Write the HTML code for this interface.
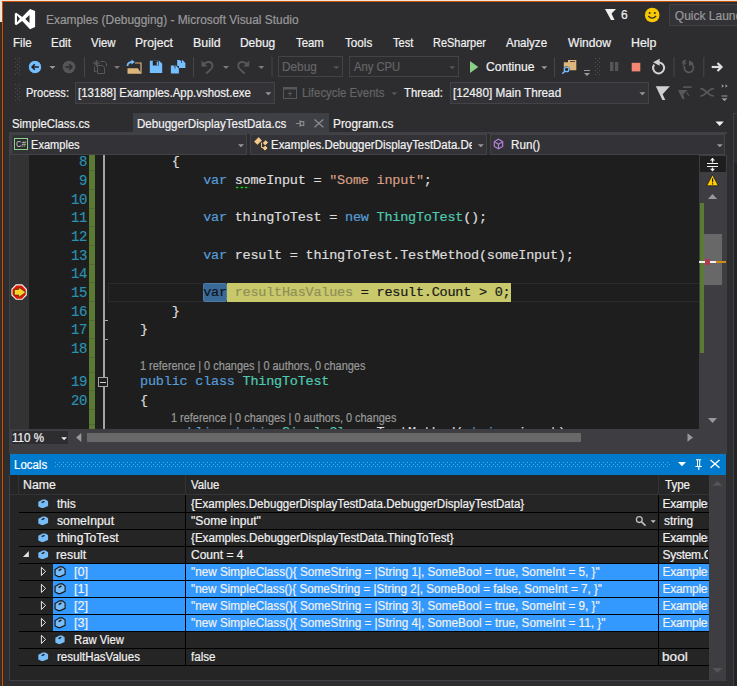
<!DOCTYPE html>
<html><head><meta charset="utf-8"><style>
html,body{margin:0;padding:0;}
body{width:737px;height:686px;overflow:hidden;background:#2d2d30;position:relative;font-family:"Liberation Sans",sans-serif;}
body>div,body>svg{position:absolute;}
.t{line-height:20px;height:20px;white-space:pre;-webkit-text-stroke:0.2px currentColor;}
</style></head><body>
<div style="left:0px;top:0px;width:737px;height:1px;background:#f4e4d8;"></div>
<div style="left:0px;top:0px;width:2px;height:22px;background:#f4e4d8;"></div>
<div style="left:0px;top:22px;width:2px;height:664px;background:#3d2a1f;"></div>
<div style="left:2px;top:1px;width:735px;height:1px;background:#ca5100;"></div>
<div style="left:2px;top:1px;width:1px;height:685px;background:#ca5100;"></div>
<svg style="left:14px;top:8px;" width="22" height="22" viewBox="0 0 22 22"><path fill="#fff" d="M16,0.9 L21.1,3 L21.1,19 L16,21.2 L8.2,12.9 L2.2,17.2 L0.8,16.3 L0.8,5.5 L2.2,4.8 L8.2,9 Z M3,7.2 L3,14.2 L5.9,10.7 Z M15.5,7 L11.3,10.9 L15.5,15 Z" fill-rule="evenodd"/></svg>
<div class="t" style="left:46.31px;top:10px;font-family:'Liberation Sans';font-size:12px;color:#999999;letter-spacing:0px;transform:scaleX(0.9921);transform-origin:0 0;">Examples (Debugging) - Microsoft Visual Studio</div>
<svg style="left:604px;top:8px;" width="13" height="13" viewBox="0 0 13 13"><path fill="#f1f1f1" d="M1,1 L12,1 L7.5,5.5 L10.5,12 L7,12 Z"/></svg>
<div class="t" style="left:620.9px;top:5px;font-family:'Liberation Sans';font-size:12px;color:#f1f1f1;letter-spacing:0px;">6</div>
<svg style="left:644px;top:7px;" width="17" height="17" viewBox="0 0 17 17"><circle cx="8.2" cy="8" r="7.3" fill="#f8c900"/><circle cx="5.6" cy="6" r="1" fill="#2d2d30"/><circle cx="10.8" cy="6" r="1" fill="#2d2d30"/><path d="M4.3,9 Q8.2,13.2 12.1,9" stroke="#2d2d30" stroke-width="1.3" fill="none"/></svg>
<div style="left:669px;top:4px;width:68px;height:22px;background:#333337;box-sizing:border-box;border:1px solid #3f3f46;border-right:none"></div>
<div class="t" style="left:674.8px;top:6px;font-family:'Liberation Sans';font-size:12px;color:#999999;letter-spacing:0px;width:62.2px;overflow:hidden;">Quick Launch</div>
<div class="t" style="left:12.63px;top:33px;font-family:'Liberation Sans';font-size:12px;color:#f1f1f1;letter-spacing:0px;transform:scaleX(0.9667);transform-origin:0 0;">File</div>
<div class="t" style="left:50.74px;top:33px;font-family:'Liberation Sans';font-size:12px;color:#f1f1f1;letter-spacing:0px;transform:scaleX(0.96);transform-origin:0 0;">Edit</div>
<div class="t" style="left:91.1px;top:33px;font-family:'Liberation Sans';font-size:12px;color:#f1f1f1;letter-spacing:0px;transform:scaleX(0.95);transform-origin:0 0;">View</div>
<div class="t" style="left:135.49px;top:33px;font-family:'Liberation Sans';font-size:12px;color:#f1f1f1;letter-spacing:0px;transform:scaleX(1.0139);transform-origin:0 0;">Project</div>
<div class="t" style="left:192.67px;top:33px;font-family:'Liberation Sans';font-size:12px;color:#f1f1f1;letter-spacing:0px;transform:scaleX(1.032);transform-origin:0 0;">Build</div>
<div class="t" style="left:239.9px;top:33px;font-family:'Liberation Sans';font-size:12px;color:#f1f1f1;letter-spacing:0px;">Debug</div>
<div class="t" style="left:296.0px;top:33px;font-family:'Liberation Sans';font-size:12px;color:#f1f1f1;letter-spacing:0px;transform:scaleX(0.9483);transform-origin:0 0;">Team</div>
<div class="t" style="left:344.7px;top:33px;font-family:'Liberation Sans';font-size:12px;color:#f1f1f1;letter-spacing:0px;transform:scaleX(0.9714);transform-origin:0 0;">Tools</div>
<div class="t" style="left:392.6px;top:33px;font-family:'Liberation Sans';font-size:12px;color:#f1f1f1;letter-spacing:0px;transform:scaleX(0.9227);transform-origin:0 0;">Test</div>
<div class="t" style="left:432.59px;top:33px;font-family:'Liberation Sans';font-size:12px;color:#f1f1f1;letter-spacing:0px;transform:scaleX(0.9123);transform-origin:0 0;">ReSharper</div>
<div class="t" style="left:506.4px;top:33px;font-family:'Liberation Sans';font-size:12px;color:#f1f1f1;letter-spacing:0px;transform:scaleX(0.9619);transform-origin:0 0;">Analyze</div>
<div class="t" style="left:567.5px;top:33px;font-family:'Liberation Sans';font-size:12px;color:#f1f1f1;letter-spacing:0px;transform:scaleX(1.0047);transform-origin:0 0;">Window</div>
<div class="t" style="left:630.77px;top:33px;font-family:'Liberation Sans';font-size:12px;color:#f1f1f1;letter-spacing:0px;transform:scaleX(1.0304);transform-origin:0 0;">Help</div>
<div style="left:278px;top:56px;width:65px;height:21px;background:transparent;box-sizing:border-box;border:1px solid #434346"></div>
<div class="t" style="left:281.81px;top:57px;font-family:'Liberation Sans';font-size:12px;color:#656565;letter-spacing:0px;transform:scaleX(0.9853);transform-origin:0 0;">Debug</div>
<div style="left:349px;top:56px;width:110px;height:21px;background:transparent;box-sizing:border-box;border:1px solid #434346"></div>
<div class="t" style="left:353.8px;top:57px;font-family:'Liberation Sans';font-size:12px;color:#656565;letter-spacing:0px;transform:scaleX(0.9347);transform-origin:0 0;">Any CPU</div>
<div class="t" style="left:486.4px;top:57px;font-family:'Liberation Sans';font-size:12px;color:#f1f1f1;letter-spacing:0px;transform:scaleX(1.0104);transform-origin:0 0;">Continue</div>
<div class="t" style="left:25.58px;top:83px;font-family:'Liberation Sans';font-size:12px;color:#f1f1f1;letter-spacing:0px;transform:scaleX(0.92);transform-origin:0 0;">Process:</div>
<div style="left:75px;top:82px;width:200px;height:22px;background:#333337;box-sizing:border-box;border:1px solid #434346"></div>
<div class="t" style="left:78.45px;top:83px;font-family:'Liberation Sans';font-size:12px;color:#f1f1f1;letter-spacing:0px;transform:scaleX(0.9528);transform-origin:0 0;">[13188] Examples.App.vshost.exe</div>
<div class="t" style="left:301.85px;top:83px;font-family:'Liberation Sans';font-size:12px;color:#656565;letter-spacing:0px;transform:scaleX(0.95);transform-origin:0 0;">Lifecycle Events</div>
<div class="t" style="left:403.6px;top:83px;font-family:'Liberation Sans';font-size:12px;color:#f1f1f1;letter-spacing:0px;transform:scaleX(0.939);transform-origin:0 0;">Thread:</div>
<div style="left:449.5px;top:82px;width:199.5px;height:22px;background:#333337;box-sizing:border-box;border:1px solid #434346"></div>
<div class="t" style="left:452.82px;top:83px;font-family:'Liberation Sans';font-size:12px;color:#f1f1f1;letter-spacing:0px;transform:scaleX(0.9789);transform-origin:0 0;">[12480] Main Thread</div>
<svg style="left:0;top:0" width="737" height="686" viewBox="0 0 737 686"><g fill="#505054"><rect x="15" y="58" width="1" height="1"/><rect x="19" y="58" width="1" height="1"/><rect x="17" y="60" width="1" height="1"/><rect x="15" y="62" width="1" height="1"/><rect x="19" y="62" width="1" height="1"/><rect x="17" y="64" width="1" height="1"/><rect x="15" y="66" width="1" height="1"/><rect x="19" y="66" width="1" height="1"/><rect x="17" y="68" width="1" height="1"/><rect x="15" y="70" width="1" height="1"/><rect x="19" y="70" width="1" height="1"/><rect x="17" y="72" width="1" height="1"/><rect x="15" y="74" width="1" height="1"/><rect x="19" y="74" width="1" height="1"/></g><circle cx="35" cy="67" r="6.6" fill="#75beff" stroke="#252526" stroke-width="0.8"/><path d="M38.8,67 H32.2 M34.8,64.3 L32.1,67 L34.8,69.7" stroke="#1e1e1e" stroke-width="1.6" fill="none"/><path fill="#999999" d="M49.5,66 h6 l-3.0,3.0 z"/><circle cx="69" cy="67" r="6.3" fill="#555558"/><path d="M65.2,67 H71.8 M69.2,64.3 L71.9,67 L69.2,69.7" stroke="#2d2d30" stroke-width="1.6" fill="none"/><rect x="84" y="57" width="1" height="20" fill="#464649"/><g stroke="#58585b" stroke-width="1" fill="none"><path d="M96.5,60 V66.5 M93.2,63.3 H99.8 M94.2,61 L98.8,65.6 M98.8,61 L94.2,65.6"/><path d="M100.5,61.5 H104.5 L106.5,63.5 V66.5"/><path d="M94.5,67 V71.5 H96.5"/><path d="M97.5,65.5 H102.5 L104.5,67.5 V73.5 H97.5 Z"/></g><path fill="#7a7a7a" d="M114,66 h6 l-3.0,3.0 z"/><path d="M127.5,66 C127.5,62.5 129.5,62 133,62" stroke="#75beff" stroke-width="1.8" fill="none"/><path fill="#75beff" d="M131.5,59.5 L134.8,62 L131.5,64.5 Z"/><path d="M135,63 H141 V73.5" stroke="#dcb67a" stroke-width="1.2" fill="none"/><path fill="#dcb67a" d="M127.5,68.3 H137.8 L141.5,73.8 H127.5 Z"/><path fill="#75beff" d="M149.8,60.8 H159.20000000000002 L162.20000000000002,63.8 V73.1 H149.8 Z"/><rect x="152.8" y="60.8" width="5.9" height="4.674" fill="#252526"/><rect x="156.70000000000002" y="61.599999999999994" width="1.4" height="3.69" fill="#75beff"/><path fill="#75beff" d="M177.2,59.9 H182.39999999999998 L185.39999999999998,62.9 V67.9 H177.2 Z"/><rect x="180.2" y="59.9" width="1.6999999999999993" height="3.04" fill="#252526"/><rect x="179.89999999999998" y="60.699999999999996" width="1.4" height="2.4" fill="#75beff"/><rect x="176" y="66" width="3" height="2" fill="#2d2d30"/><path fill="#75beff" d="M170.9,65.6 H175.9 L178.9,68.6 V73.6 H170.9 Z"/><rect x="173.9" y="65.6" width="1.5" height="3.04" fill="#252526"/><rect x="173.4" y="66.39999999999999" width="1.4" height="2.4" fill="#75beff"/><rect x="193" y="57" width="1" height="20" fill="#464649"/><g stroke="#58585b" stroke-width="1.9" fill="none" stroke-linecap="butt"><path d="M203.5,64.5 C206,61 212.5,61 212.5,66 C212.5,68 210,70.5 206,73.5"/><path d="M247.2,64.5 C244.7,61 238.2,61 238.2,66 C238.2,68 240.7,70.5 244.7,73.5"/></g><path fill="#58585b" d="M201.5,60.5 L201.5,66.5 L207.5,66.5 Z"/><path fill="#58585b" d="M249.2,60.5 L249.2,66.5 L243.2,66.5 Z"/><path fill="#7a7a7a" d="M223,66 h6 l-3.0,3.0 z"/><path fill="#7a7a7a" d="M258.3,66 h6 l-3.0,3.0 z"/><rect x="271.5" y="57" width="1" height="20" fill="#464649"/><path fill="#555558" d="M333.3,66.3 h6 l-3.0,3.0 z"/><path fill="#555558" d="M449.2,66.3 h6 l-3.0,3.0 z"/><path fill="#89d185" d="M470,61 L478.3,67 L470,73 Z"/><path fill="#999999" d="M541.3,66.3 h6 l-3.0,3.0 z"/><rect x="554" y="57" width="1" height="20" fill="#464649"/><path fill="#dcb67a" d="M568,60 H576.3 V70.2 H563.8 V62.3 H568 Z"/><rect x="570" y="61" width="5" height="1" fill="#2d2d30" opacity="0.8"/><circle cx="566.6" cy="69.4" r="3.1" fill="#2d2d30"/><circle cx="566.6" cy="69.4" r="2.3" stroke="#75beff" stroke-width="1.3" fill="none"/><path d="M565,71 L562.3,73.8" stroke="#75beff" stroke-width="1.5"/><rect x="584" y="70" width="6" height="1" fill="#999999"/><path fill="#999999" d="M584,73 h6 l-3.0,3.0 z"/><g fill="#505054"><rect x="595" y="58" width="1" height="1"/><rect x="599" y="58" width="1" height="1"/><rect x="597" y="60" width="1" height="1"/><rect x="595" y="62" width="1" height="1"/><rect x="599" y="62" width="1" height="1"/><rect x="597" y="64" width="1" height="1"/><rect x="595" y="66" width="1" height="1"/><rect x="599" y="66" width="1" height="1"/><rect x="597" y="68" width="1" height="1"/><rect x="595" y="70" width="1" height="1"/><rect x="599" y="70" width="1" height="1"/><rect x="597" y="72" width="1" height="1"/><rect x="595" y="74" width="1" height="1"/><rect x="599" y="74" width="1" height="1"/></g><rect x="610" y="62" width="3.5" height="9" fill="#555558"/><rect x="615" y="62" width="3.3" height="9" fill="#555558"/><rect x="631.7" y="62.8" width="8.6" height="8.6" fill="#f48771"/><path d="M659,62.4 A5.5,5.5 0 1 1 654.2,64.6" stroke="#d0d0d0" stroke-width="2" fill="none"/><path fill="#d0d0d0" d="M653,62.2 L659.6,58.8 L659.6,65.8 Z"/><rect x="673.5" y="57" width="1" height="20" fill="#464649"/><path d="M689.3,63.2 A4.6,4.6 0 1 1 684.6,66" stroke="#58585b" stroke-width="1.7" fill="none"/><path fill="#58585b" d="M689,60.3 L693.8,63.3 L689,66.3 Z"/><path fill="#58585b" d="M683.5,60 L686.3,60 L684.6,62.6 L686.8,62.6 L682.3,66.8 L683.6,63.6 L681.6,63.6 Z"/><rect x="703.3" y="57" width="1" height="20" fill="#464649"/><path d="M711.7,67 H721" stroke="#e0e0e0" stroke-width="2.2"/><path d="M717.5,63 L721.5,67 L717.5,71" stroke="#e0e0e0" stroke-width="2.2" fill="none"/><g fill="#505054"><rect x="15" y="84" width="1" height="1"/><rect x="19" y="84" width="1" height="1"/><rect x="17" y="86" width="1" height="1"/><rect x="15" y="88" width="1" height="1"/><rect x="19" y="88" width="1" height="1"/><rect x="17" y="90" width="1" height="1"/><rect x="15" y="92" width="1" height="1"/><rect x="19" y="92" width="1" height="1"/><rect x="17" y="94" width="1" height="1"/><rect x="15" y="96" width="1" height="1"/><rect x="19" y="96" width="1" height="1"/><rect x="17" y="98" width="1" height="1"/><rect x="15" y="100" width="1" height="1"/><rect x="19" y="100" width="1" height="1"/></g><path fill="#999999" d="M265.3,92.2 h6 l-3.0,3.0 z"/><rect x="283.5" y="87.5" width="13" height="11" stroke="#58585b" fill="none"/><rect x="283.5" y="87.5" width="13" height="2" fill="#58585b"/><path fill="#58585b" d="M291,90.5 L287.5,94 H290 L288.5,97.5 L292.5,93 H290 Z"/><path fill="#555558" d="M391.3,92.2 h6 l-3.0,3.0 z"/><path fill="#999999" d="M639.4,92.2 h6 l-3.0,3.0 z"/><path fill="#d0d0d0" d="M655.8,86.3 H669.9 L662.6,94.3 L665.3,99.9 H662.4 Z"/><g fill="#58585b"><rect x="683" y="86.3" width="8.6" height="1.6"/><path d="M678,90.1 H687.8 L683.2,94.3 L684.6,99 H682.3 Z"/><path d="M686.6,92.6 L689,95.6" stroke="#58585b" stroke-width="1.2"/></g><path d="M700.3,88.6 C704,88.6 704.5,90.5 707,92.3 C709.5,94.1 710,96 713.9,96 M700.3,96 C704,96 704.5,94.1 707,92.3 C709.5,90.5 710,88.6 713.9,88.6" stroke="#58585b" stroke-width="1.7" fill="none"/><g fill="#999999"><path d="M721.8,84.3 L724,86 L721.8,87.7 Z M725.5,84.3 L727.7,86 L725.5,87.7 Z"/><rect x="721.5" y="95.5" width="6" height="1"/></g><path fill="#999999" d="M721.5,98.3 h6 l-3.0,3.0 z"/></svg>
<div style="left:133px;top:113px;width:196px;height:21px;background:#3f3f46;"></div>
<div style="left:9px;top:132px;width:718px;height:2px;background:#3f3f46;"></div>
<div class="t" style="left:12.25px;top:114px;font-family:'Liberation Sans';font-size:12px;color:#f1f1f1;letter-spacing:0px;transform:scaleX(0.9481);transform-origin:0 0;">SimpleClass.cs</div>
<div class="t" style="left:136.74px;top:114px;font-family:'Liberation Sans';font-size:12px;color:#f1f1f1;letter-spacing:0px;transform:scaleX(0.9643);transform-origin:0 0;">DebuggerDisplayTestData.cs</div>
<div class="t" style="left:332.81px;top:114px;font-family:'Liberation Sans';font-size:12px;color:#f1f1f1;letter-spacing:0px;transform:scaleX(0.985);transform-origin:0 0;">Program.cs</div>
<div style="left:9px;top:134px;width:718px;height:21px;background:#2d2d30;"></div>
<div style="left:9px;top:134px;width:2px;height:21px;background:#3f3f46;"></div>
<div style="left:11px;top:134px;width:236px;height:21px;background:#333337;box-sizing:border-box;border:1px solid #434346"></div>
<div style="left:250px;top:134px;width:236.5px;height:21px;background:#333337;box-sizing:border-box;border:1px solid #434346"></div>
<div style="left:490px;top:134px;width:235px;height:21px;background:#333337;box-sizing:border-box;border:1px solid #434346"></div>
<div style="left:14px;top:138px;width:14px;height:12px;background:#2d2d30;box-sizing:border-box;border:1px solid #8bd38b"></div>
<div class="t" style="left:15.8px;top:134.4px;font-family:'Liberation Sans';font-size:8.5px;color:#cfcfcf;letter-spacing:0px;transform:scaleX(0.9273);transform-origin:0 0;-webkit-text-stroke:0;">C#</div>
<div class="t" style="left:30.78px;top:134.5px;font-family:'Liberation Sans';font-size:12px;color:#f1f1f1;letter-spacing:0px;transform:scaleX(0.9231);transform-origin:0 0;">Examples</div>
<div class="t" style="left:270.95px;top:134.5px;font-family:'Liberation Sans';font-size:12px;color:#f1f1f1;letter-spacing:0px;transform:scaleX(0.9531);transform-origin:0 0;width:211.47px;overflow:hidden;">Examples.DebuggerDisplayTestData.De</div>
<div class="t" style="left:510.53px;top:134.5px;font-family:'Liberation Sans';font-size:12px;color:#f1f1f1;letter-spacing:0px;transform:scaleX(0.9724);transform-origin:0 0;">Run()</div>
<svg style="left:0;top:0" width="737" height="686" viewBox="0 0 737 686"><g fill="#8a8a8a"><rect x="295.8" y="123" width="4" height="1"/><rect x="299.5" y="120" width="1" height="7"/><path d="M300,121 H304.3 V126 H300 Z M301,122.3 V124.8 H303.2 V122.3 Z" fill-rule="evenodd"/></g><path d="M314.5,119.5 L323.3,127.3 M323.3,119.5 L314.5,127.3" stroke="#8a8a8a" stroke-width="1.3"/><path fill="#f1f1f1" d="M715.5,121.5 H723.8 L719.65,126 Z"/><path fill="#999999" d="M238,144.2 h6 l-3.0,3.0 z"/><g fill="#f2c88c" stroke="#1e1e1e" stroke-width="0.6"><path d="M253.8,141.6 L258.6,136.8 L262.2,140.4 L257.4,145.2 Z"/><path d="M262.4,143 L265.6,139.8 L268.4,142.6 L265.2,145.8 Z"/><path d="M262.2,148.2 L265.2,145.2 L268,148 L265,151 Z"/></g><path d="M261.5,142.6 V147.5 H263.5" stroke="#f2c88c" stroke-width="1" fill="none"/><path fill="#999999" d="M477.8,144.2 h6 l-3.0,3.0 z"/><g stroke="#b180d7" stroke-width="1.2" fill="none"><path d="M498.5,139.2 L502.7,141.6 V146.4 L498.5,148.8 L494.3,146.4 V141.6 Z"/><path d="M494.5,141.8 L498.5,144.2 L502.5,141.8 M498.5,144.2 V148.6"/></g><path fill="#999999" d="M716.8,144.2 h6 l-3.0,3.0 z"/></svg>
<div style="left:9px;top:155px;width:1px;height:274px;background:#3f3f46;"></div>
<div style="left:10px;top:155px;width:19px;height:274px;background:#333333;"></div>
<div style="left:29px;top:155px;width:670px;height:274px;background:#1e1e1e;"></div>
<div style="left:108px;top:283px;width:591px;height:19px;background:#1e1e1e;box-sizing:border-box;border:1px solid #2b2b2b;border-right:none"></div>
<div style="left:89px;top:155px;width:6px;height:274px;background:#5b7a34;"></div>
<div style="left:89px;top:170px;width:6px;height:1px;background:#4f6a2e;"></div>
<div style="left:89px;top:189px;width:6px;height:1px;background:#4f6a2e;"></div>
<div style="left:89px;top:208px;width:6px;height:1px;background:#4f6a2e;"></div>
<div style="left:89px;top:226px;width:6px;height:1px;background:#4f6a2e;"></div>
<div style="left:89px;top:245px;width:6px;height:1px;background:#4f6a2e;"></div>
<div style="left:89px;top:264px;width:6px;height:1px;background:#4f6a2e;"></div>
<div style="left:89px;top:282px;width:6px;height:1px;background:#4f6a2e;"></div>
<div style="left:89px;top:301px;width:6px;height:1px;background:#4f6a2e;"></div>
<div style="left:89px;top:320px;width:6px;height:1px;background:#4f6a2e;"></div>
<div style="left:89px;top:338px;width:6px;height:1px;background:#4f6a2e;"></div>
<div style="left:89px;top:372px;width:6px;height:1px;background:#4f6a2e;"></div>
<div style="left:89px;top:390px;width:6px;height:1px;background:#4f6a2e;"></div>
<div style="left:89px;top:424px;width:6px;height:1px;background:#4f6a2e;"></div>
<div style="left:89px;top:357px;width:6px;height:1px;background:#4f6a2e;"></div>
<div style="left:89px;top:409px;width:6px;height:1px;background:#4f6a2e;"></div>
<div style="left:103px;top:155px;width:1.5px;height:274px;background:#a5a5a5;"></div>
<div style="left:103px;top:320px;width:5px;height:1px;background:#a5a5a5;"></div>
<div style="left:103px;top:339px;width:5px;height:1px;background:#a5a5a5;"></div>
<div style="left:98px;top:377px;width:10px;height:10px;background:#1e1e1e;box-sizing:border-box;border:1px solid #a5a5a5"></div>
<div style="left:100px;top:381.5px;width:6px;height:1px;background:#d0d0d0;"></div>
<div class="t" style="left:78.92px;top:152px;font-family:'Liberation Mono';font-size:14px;color:#2b91af;letter-spacing:-0.521px;">8</div>
<div class="t" style="left:78.92px;top:171px;font-family:'Liberation Mono';font-size:14px;color:#2b91af;letter-spacing:-0.521px;">9</div>
<div class="t" style="left:71.04px;top:190px;font-family:'Liberation Mono';font-size:14px;color:#2b91af;letter-spacing:-0.521px;">10</div>
<div class="t" style="left:71.04px;top:208px;font-family:'Liberation Mono';font-size:14px;color:#2b91af;letter-spacing:-0.521px;">11</div>
<div class="t" style="left:71.04px;top:227px;font-family:'Liberation Mono';font-size:14px;color:#2b91af;letter-spacing:-0.521px;">12</div>
<div class="t" style="left:71.04px;top:246px;font-family:'Liberation Mono';font-size:14px;color:#2b91af;letter-spacing:-0.521px;">13</div>
<div class="t" style="left:71.04px;top:264px;font-family:'Liberation Mono';font-size:14px;color:#2b91af;letter-spacing:-0.521px;">14</div>
<div class="t" style="left:71.04px;top:283px;font-family:'Liberation Mono';font-size:14px;color:#2b91af;letter-spacing:-0.521px;">15</div>
<div class="t" style="left:71.04px;top:302px;font-family:'Liberation Mono';font-size:14px;color:#2b91af;letter-spacing:-0.521px;">16</div>
<div class="t" style="left:71.04px;top:320px;font-family:'Liberation Mono';font-size:14px;color:#2b91af;letter-spacing:-0.521px;">17</div>
<div class="t" style="left:71.04px;top:339px;font-family:'Liberation Mono';font-size:14px;color:#2b91af;letter-spacing:-0.521px;">18</div>
<div class="t" style="left:71.04px;top:372px;font-family:'Liberation Mono';font-size:14px;color:#2b91af;letter-spacing:-0.521px;">19</div>
<div class="t" style="left:71.04px;top:391px;font-family:'Liberation Mono';font-size:14px;color:#2b91af;letter-spacing:-0.521px;">20</div>
<div class="t" style="left:171.64px;top:152px;font-family:'Liberation Mono';font-size:13.5px;color:#dcdcdc;letter-spacing:-0.221px;">{</div>
<div class="t" style="left:203.16px;top:171px;font-family:'Liberation Mono';font-size:13.5px;color:#569cd6;letter-spacing:-0.221px;">var</div>
<div class="t" style="left:234.68px;top:171px;font-family:'Liberation Mono';font-size:13.5px;color:#dcdcdc;letter-spacing:-0.221px;">someInput =</div>
<div class="t" style="left:329.24px;top:171px;font-family:'Liberation Mono';font-size:13.5px;color:#d69d85;letter-spacing:-0.221px;">&quot;Some input&quot;</div>
<div class="t" style="left:423.8px;top:171px;font-family:'Liberation Mono';font-size:13.5px;color:#dcdcdc;letter-spacing:-0.221px;">;</div>
<div class="t" style="left:203.16px;top:208px;font-family:'Liberation Mono';font-size:13.5px;color:#569cd6;letter-spacing:-0.221px;">var</div>
<div class="t" style="left:234.68px;top:208px;font-family:'Liberation Mono';font-size:13.5px;color:#dcdcdc;letter-spacing:-0.221px;">thingToTest =</div>
<div class="t" style="left:345.0px;top:208px;font-family:'Liberation Mono';font-size:13.5px;color:#569cd6;letter-spacing:-0.221px;">new</div>
<div class="t" style="left:376.52px;top:208px;font-family:'Liberation Mono';font-size:13.5px;color:#4ec9b0;letter-spacing:-0.221px;">ThingToTest</div>
<div class="t" style="left:463.2px;top:208px;font-family:'Liberation Mono';font-size:13.5px;color:#dcdcdc;letter-spacing:-0.221px;">();</div>
<div class="t" style="left:203.16px;top:246px;font-family:'Liberation Mono';font-size:13.5px;color:#569cd6;letter-spacing:-0.221px;">var</div>
<div class="t" style="left:234.68px;top:246px;font-family:'Liberation Mono';font-size:13.5px;color:#dcdcdc;letter-spacing:-0.221px;">result = thingToTest.TestMethod(someInput);</div>
<div style="left:203px;top:283px;width:24px;height:19px;background:#3a6a98;box-sizing:border-box;border:1px solid #4f7ba6;border-radius:2px"></div>
<div style="left:227px;top:283px;width:284px;height:19px;background:#c9c96b;"></div>
<div class="t" style="left:203.16px;top:283px;font-family:'Liberation Mono';font-size:13.5px;color:#101418;letter-spacing:-0.221px;">var</div>
<div class="t" style="left:234.68px;top:283px;font-family:'Liberation Mono';font-size:13.5px;color:#8f8f58;letter-spacing:-0.221px;">resultHasValues</div>
<div class="t" style="left:360.76px;top:283px;font-family:'Liberation Mono';font-size:13.5px;color:#1a1a1a;letter-spacing:-0.221px;">= result.Count &gt; 0;</div>
<div class="t" style="left:171.64px;top:302px;font-family:'Liberation Mono';font-size:13.5px;color:#dcdcdc;letter-spacing:-0.221px;">}</div>
<div class="t" style="left:140.12px;top:320px;font-family:'Liberation Mono';font-size:13.5px;color:#dcdcdc;letter-spacing:-0.221px;">}</div>
<div class="t" style="left:140.12px;top:372px;font-family:'Liberation Mono';font-size:13.5px;color:#569cd6;letter-spacing:-0.221px;">public</div>
<div class="t" style="left:195.28px;top:372px;font-family:'Liberation Mono';font-size:13.5px;color:#569cd6;letter-spacing:-0.221px;">class</div>
<div class="t" style="left:242.56px;top:372px;font-family:'Liberation Mono';font-size:13.5px;color:#4ec9b0;letter-spacing:-0.221px;">ThingToTest</div>
<div class="t" style="left:140.12px;top:391px;font-family:'Liberation Mono';font-size:13.5px;color:#dcdcdc;letter-spacing:-0.221px;">{</div>
<div class="t" style="left:171.64px;top:423px;font-family:'Liberation Mono';font-size:13.5px;color:#569cd6;letter-spacing:-0.221px;">public</div>
<div class="t" style="left:226.8px;top:423px;font-family:'Liberation Mono';font-size:13.5px;color:#569cd6;letter-spacing:-0.221px;">static</div>
<div class="t" style="left:281.96px;top:423px;font-family:'Liberation Mono';font-size:13.5px;color:#4ec9b0;letter-spacing:-0.221px;">SimpleClass</div>
<div class="t" style="left:376.52px;top:423px;font-family:'Liberation Mono';font-size:13.5px;color:#dcdcdc;letter-spacing:-0.221px;">TestMethod(</div>
<div class="t" style="left:463.2px;top:423px;font-family:'Liberation Mono';font-size:13.5px;color:#569cd6;letter-spacing:-0.221px;">string</div>
<div class="t" style="left:518.36px;top:423px;font-family:'Liberation Mono';font-size:13.5px;color:#dcdcdc;letter-spacing:-0.221px;">input)</div>
<div class="t" style="left:139.99px;top:356px;font-family:'Liberation Sans';font-size:12px;color:#999999;letter-spacing:0px;transform:scaleX(0.9097);transform-origin:0 0;">1 reference | 0 changes | 0 authors, 0 changes</div>
<div class="t" style="left:170.69px;top:407.5px;font-family:'Liberation Sans';font-size:12px;color:#999999;letter-spacing:0px;transform:scaleX(0.9097);transform-origin:0 0;">1 reference | 0 changes | 0 authors, 0 changes</div>
<svg style="left:0;top:0" width="737" height="686" viewBox="0 0 737 686"><g fill="#10d010"><rect x="236" y="186.8" width="2.4" height="1.4"/><rect x="240.6" y="186.8" width="2.4" height="1.4"/><rect x="244.8" y="186.8" width="2.6" height="1.4"/><rect x="249.3" y="186.8" width="0.8" height="1.4" opacity="0.5"/></g><polygon points="26.86,295.31 22.31,299.86 15.89,299.86 11.34,295.31 11.34,288.89 15.89,284.34 22.31,284.34 26.86,288.89" fill="#f0f0f0"/><polygon points="25.66,294.82 21.82,298.66 16.38,298.66 12.54,294.82 12.54,289.38 16.38,285.54 21.82,285.54 25.66,289.38" fill="#e51400"/><path fill="#ffd42a" stroke="#3a2a10" stroke-width="0.7" d="M14.3,289.4 H18.7 V287.2 L25.8,292.3 L18.7,297.4 V295.1 H14.3 Z"/></svg>
<div style="left:699px;top:155px;width:28px;height:274px;background:#3e3e42;"></div>
<div style="left:700px;top:156px;width:26px;height:16px;background:#1e1e1e;"></div>
<div style="left:700px;top:203px;width:4px;height:150px;background:#5b7a34;"></div>
<div style="left:704px;top:234px;width:18px;height:51px;background:#686868;"></div>
<div style="left:699px;top:261px;width:17px;height:2px;background:#f0f0f0;"></div>
<div style="left:716px;top:261px;width:10px;height:2px;background:#d68a0c;"></div>
<div style="left:705px;top:259.2px;width:5px;height:5.6px;background:#b0394a;"></div>
<svg style="left:0;top:0" width="737" height="686" viewBox="0 0 737 686"><g stroke="#f0f0f0" stroke-width="1.2" fill="none"><path d="M707,163.5 H718 M707,166.5 H718 M712.5,158.5 V162.5 M712.5,167.5 V171"/></g><path fill="#f0f0f0" d="M710,160.5 L712.5,157.8 L715,160.5 Z M710,168.8 L712.5,171.5 L715,168.8 Z"/><path fill="#ffcc00" stroke="#1e1e1e" stroke-width="0.8" stroke-linejoin="round" d="M712.5,174.7 L718.4,185.8 H706.6 Z"/><rect x="712" y="178.3" width="1.2" height="4" fill="#1e1e1e"/><rect x="712" y="183.2" width="1.2" height="1.3" fill="#1e1e1e"/><path fill="#999999" d="M707.9,199 L712.5,194 L717.1,199 Z"/><path fill="#999999" d="M708,418 H717 L712.5,423 Z"/></svg>
<div style="left:9px;top:429px;width:718px;height:25px;background:#3e3e42;"></div>
<div style="left:11px;top:430px;width:58px;height:15px;background:#2d2d30;box-sizing:border-box;border:1px solid #3f3f46"></div>
<div class="t" style="left:11.73px;top:428px;font-family:'Liberation Sans';font-size:12px;color:#f1f1f1;letter-spacing:0px;transform:scaleX(0.9656);transform-origin:0 0;">110 %</div>
<div style="left:87px;top:433px;width:494px;height:9px;background:#686868;"></div>
<svg style="left:0;top:0" width="737" height="686" viewBox="0 0 737 686"><path fill="#f1f1f1" d="M61.2,437.2 H67 L64.1,440.2 Z"/><path fill="#999999" d="M81.3,433.1 V442.1 L76.1,437.6 Z"/><path fill="#999999" d="M687.5,433.3 V441.7 L693,437.5 Z"/></svg>
<div style="left:733px;top:113px;width:1px;height:573px;background:#3f3f46;"></div>
<div style="left:733px;top:113px;width:4px;height:1px;background:#3f3f46;"></div>
<div style="left:734px;top:163px;width:3px;height:523px;background:#232325;"></div>
<div style="left:9px;top:454px;width:718px;height:227px;background:#2d2d30;"></div>
<div style="left:9px;top:475px;width:1px;height:205px;background:#3f3f46;"></div>
<div style="left:9px;top:679.6px;width:718px;height:1.4px;background:#3f3f46;"></div>
<div style="left:10px;top:475px;width:699px;height:204.6px;background:#252526;"></div>
<div style="left:10px;top:454px;width:716.4px;height:21px;background:#007acc;"></div>
<div class="t" style="left:13.74px;top:455px;font-family:'Liberation Sans';font-size:12px;color:#ffffff;letter-spacing:0px;transform:scaleX(0.9559);transform-origin:0 0;">Locals</div>
<div style="left:10px;top:493.5px;width:699px;height:1.5px;background:#333337;"></div>
<div style="left:18px;top:475px;width:1px;height:19px;background:#333337;"></div>
<div style="left:185px;top:475px;width:1px;height:19px;background:#333337;"></div>
<div style="left:658px;top:475px;width:1px;height:19px;background:#333337;"></div>
<div class="t" style="left:23.37px;top:475px;font-family:'Liberation Sans';font-size:12px;color:#f1f1f1;letter-spacing:0px;transform:scaleX(1.0258);transform-origin:0 0;">Name</div>
<div class="t" style="left:191.4px;top:475px;font-family:'Liberation Sans';font-size:12px;color:#f1f1f1;letter-spacing:0px;transform:scaleX(0.95);transform-origin:0 0;">Value</div>
<div class="t" style="left:665.0px;top:475px;font-family:'Liberation Sans';font-size:12px;color:#f1f1f1;letter-spacing:0px;transform:scaleX(0.9615);transform-origin:0 0;">Type</div>
<div style="left:19px;top:512px;width:689.7px;height:1px;background:#000000;"></div>
<div style="left:185px;top:495px;width:1px;height:17px;background:#000000;"></div>
<div style="left:658px;top:495px;width:1px;height:17px;background:#000000;"></div>
<div class="t" style="left:57.0px;top:494px;font-family:'Liberation Sans';font-size:12px;color:#f1f1f1;letter-spacing:0px;">this</div>
<div class="t" style="left:190.6px;top:494px;font-family:'Liberation Sans';font-size:12px;color:#f1f1f1;letter-spacing:0px;transform:scaleX(0.9624);transform-origin:0 0;width:484.62px;overflow:hidden;">{Examples.DebuggerDisplayTestData.DebuggerDisplayTestData}</div>
<div class="t" style="left:662.6px;top:494px;font-family:'Liberation Sans';font-size:12px;color:#f1f1f1;letter-spacing:-0.3px;width:45.4px;overflow:hidden;">Examples.DebuggerDisplayTestData.DebuggerDisplayTestData</div>
<div style="left:19px;top:529px;width:689.7px;height:1px;background:#000000;"></div>
<div style="left:185px;top:512px;width:1px;height:17px;background:#000000;"></div>
<div style="left:658px;top:512px;width:1px;height:17px;background:#000000;"></div>
<div class="t" style="left:57.0px;top:511px;font-family:'Liberation Sans';font-size:12px;color:#f1f1f1;letter-spacing:0px;transform:scaleX(1.0179);transform-origin:0 0;">someInput</div>
<div class="t" style="left:190.6px;top:511px;font-family:'Liberation Sans';font-size:12px;color:#f1f1f1;letter-spacing:0px;transform:scaleX(1.0101);transform-origin:0 0;width:461.74px;overflow:hidden;">&quot;Some input&quot;</div>
<div class="t" style="left:663.6px;top:511px;font-family:'Liberation Sans';font-size:12px;color:#f1f1f1;letter-spacing:0px;transform:scaleX(0.9931);transform-origin:0 0;width:44.71px;overflow:hidden;">string</div>
<div style="left:19px;top:546px;width:689.7px;height:1px;background:#000000;"></div>
<div style="left:185px;top:529px;width:1px;height:17px;background:#000000;"></div>
<div style="left:658px;top:529px;width:1px;height:17px;background:#000000;"></div>
<div class="t" style="left:57.0px;top:528px;font-family:'Liberation Sans';font-size:12px;color:#f1f1f1;letter-spacing:0px;transform:scaleX(1.0148);transform-origin:0 0;">thingToTest</div>
<div class="t" style="left:190.6px;top:528px;font-family:'Liberation Sans';font-size:12px;color:#f1f1f1;letter-spacing:0px;transform:scaleX(0.9676);transform-origin:0 0;width:482.02px;overflow:hidden;">{Examples.DebuggerDisplayTestData.ThingToTest}</div>
<div class="t" style="left:662.6px;top:528px;font-family:'Liberation Sans';font-size:12px;color:#f1f1f1;letter-spacing:-0.3px;width:45.4px;overflow:hidden;">Examples.DebuggerDisplayTestData.ThingToTest</div>
<div style="left:19px;top:563px;width:689.7px;height:1px;background:#000000;"></div>
<div style="left:185px;top:546px;width:1px;height:17px;background:#000000;"></div>
<div style="left:658px;top:546px;width:1px;height:17px;background:#000000;"></div>
<div class="t" style="left:55.97px;top:545px;font-family:'Liberation Sans';font-size:12px;color:#f1f1f1;letter-spacing:0px;transform:scaleX(1.0286);transform-origin:0 0;">result</div>
<div class="t" style="left:190.6px;top:545px;font-family:'Liberation Sans';font-size:12px;color:#f1f1f1;letter-spacing:0px;transform:scaleX(1.0019);transform-origin:0 0;width:465.52px;overflow:hidden;">Count = 4</div>
<div class="t" style="left:662.6px;top:545px;font-family:'Liberation Sans';font-size:12px;color:#f1f1f1;letter-spacing:-0.3px;width:45.4px;overflow:hidden;">System.Collections.Generic.List</div>
<div style="left:53px;top:564px;width:655.7px;height:16px;background:#3399ff;"></div>
<div style="left:19px;top:580px;width:689.7px;height:1px;background:#000000;"></div>
<div style="left:185px;top:563px;width:1px;height:17px;background:#000000;"></div>
<div style="left:658px;top:563px;width:1px;height:17px;background:#000000;"></div>
<div class="t" style="left:73.85px;top:562px;font-family:'Liberation Sans';font-size:12px;color:#f1f1f1;letter-spacing:0px;transform:scaleX(1.05);transform-origin:0 0;">[0]</div>
<div class="t" style="left:190.6px;top:562px;font-family:'Liberation Sans';font-size:12px;color:#f1f1f1;letter-spacing:0px;transform:scaleX(0.9761);transform-origin:0 0;width:477.82px;overflow:hidden;">&quot;new SimpleClass(){ SomeString = |String 1|, SomeBool = true, SomeInt = 5, }&quot;</div>
<div class="t" style="left:662.6px;top:562px;font-family:'Liberation Sans';font-size:12px;color:#f1f1f1;letter-spacing:-0.3px;width:45.4px;overflow:hidden;">Examples.DebuggerDisplayTestData.SimpleClass</div>
<div style="left:53px;top:581px;width:655.7px;height:16px;background:#3399ff;"></div>
<div style="left:19px;top:597px;width:689.7px;height:1px;background:#000000;"></div>
<div style="left:185px;top:580px;width:1px;height:17px;background:#000000;"></div>
<div style="left:658px;top:580px;width:1px;height:17px;background:#000000;"></div>
<div class="t" style="left:73.85px;top:579px;font-family:'Liberation Sans';font-size:12px;color:#f1f1f1;letter-spacing:0px;transform:scaleX(1.05);transform-origin:0 0;">[1]</div>
<div class="t" style="left:190.6px;top:579px;font-family:'Liberation Sans';font-size:12px;color:#f1f1f1;letter-spacing:0px;transform:scaleX(0.9709);transform-origin:0 0;width:480.38px;overflow:hidden;">&quot;new SimpleClass(){ SomeString = |String 2|, SomeBool = false, SomeInt = 7, }&quot;</div>
<div class="t" style="left:662.6px;top:579px;font-family:'Liberation Sans';font-size:12px;color:#f1f1f1;letter-spacing:-0.3px;width:45.4px;overflow:hidden;">Examples.DebuggerDisplayTestData.SimpleClass</div>
<div style="left:53px;top:598px;width:655.7px;height:16px;background:#3399ff;"></div>
<div style="left:19px;top:614px;width:689.7px;height:1px;background:#000000;"></div>
<div style="left:185px;top:597px;width:1px;height:17px;background:#000000;"></div>
<div style="left:658px;top:597px;width:1px;height:17px;background:#000000;"></div>
<div class="t" style="left:73.85px;top:596px;font-family:'Liberation Sans';font-size:12px;color:#f1f1f1;letter-spacing:0px;transform:scaleX(1.05);transform-origin:0 0;">[2]</div>
<div class="t" style="left:190.6px;top:596px;font-family:'Liberation Sans';font-size:12px;color:#f1f1f1;letter-spacing:0px;transform:scaleX(0.9761);transform-origin:0 0;width:477.82px;overflow:hidden;">&quot;new SimpleClass(){ SomeString = |String 3|, SomeBool = true, SomeInt = 9, }&quot;</div>
<div class="t" style="left:662.6px;top:596px;font-family:'Liberation Sans';font-size:12px;color:#f1f1f1;letter-spacing:-0.3px;width:45.4px;overflow:hidden;">Examples.DebuggerDisplayTestData.SimpleClass</div>
<div style="left:53px;top:615px;width:655.7px;height:16px;background:#3399ff;"></div>
<div style="left:19px;top:631px;width:689.7px;height:1px;background:#000000;"></div>
<div style="left:185px;top:614px;width:1px;height:17px;background:#000000;"></div>
<div style="left:658px;top:614px;width:1px;height:17px;background:#000000;"></div>
<div class="t" style="left:73.85px;top:613px;font-family:'Liberation Sans';font-size:12px;color:#f1f1f1;letter-spacing:0px;transform:scaleX(1.05);transform-origin:0 0;">[3]</div>
<div class="t" style="left:190.6px;top:613px;font-family:'Liberation Sans';font-size:12px;color:#f1f1f1;letter-spacing:0px;transform:scaleX(0.9762);transform-origin:0 0;width:477.77px;overflow:hidden;">&quot;new SimpleClass(){ SomeString = |String 4|, SomeBool = true, SomeInt = 11, }&quot;</div>
<div class="t" style="left:662.6px;top:613px;font-family:'Liberation Sans';font-size:12px;color:#f1f1f1;letter-spacing:-0.3px;width:45.4px;overflow:hidden;">Examples.DebuggerDisplayTestData.SimpleClass</div>
<div style="left:19px;top:648px;width:689.7px;height:1px;background:#000000;"></div>
<div style="left:185px;top:631px;width:1px;height:17px;background:#000000;"></div>
<div style="left:658px;top:631px;width:1px;height:17px;background:#000000;"></div>
<div class="t" style="left:73.66px;top:630px;font-family:'Liberation Sans';font-size:12px;color:#f1f1f1;letter-spacing:0px;transform:scaleX(0.9404);transform-origin:0 0;">Raw View</div>
<div style="left:19px;top:665px;width:689.7px;height:1px;background:#000000;"></div>
<div style="left:185px;top:648px;width:1px;height:17px;background:#000000;"></div>
<div style="left:658px;top:648px;width:1px;height:17px;background:#000000;"></div>
<div class="t" style="left:56.54px;top:647px;font-family:'Liberation Sans';font-size:12px;color:#f1f1f1;letter-spacing:0px;transform:scaleX(0.9588);transform-origin:0 0;">resultHasValues</div>
<div class="t" style="left:190.6px;top:647px;font-family:'Liberation Sans';font-size:12px;color:#f1f1f1;letter-spacing:0px;transform:scaleX(0.968);transform-origin:0 0;width:481.82px;overflow:hidden;">false</div>
<div class="t" style="left:662.47px;top:647px;font-family:'Liberation Sans';font-size:12px;color:#f1f1f1;letter-spacing:0px;transform:scaleX(1.1333);transform-origin:0 0;width:40.17px;overflow:hidden;">bool</div>
<div style="left:708.7px;top:475px;width:17.7px;height:205.6px;background:#3e3e42;"></div>
<svg style="left:0;top:0" width="737" height="686" viewBox="0 0 737 686"><g fill="#5aaee8"><rect x="55" y="462" width="1" height="1"/><rect x="55" y="466" width="1" height="1"/><rect x="57" y="464" width="1" height="1"/><rect x="59" y="462" width="1" height="1"/><rect x="59" y="466" width="1" height="1"/><rect x="61" y="464" width="1" height="1"/><rect x="63" y="462" width="1" height="1"/><rect x="63" y="466" width="1" height="1"/><rect x="65" y="464" width="1" height="1"/><rect x="67" y="462" width="1" height="1"/><rect x="67" y="466" width="1" height="1"/><rect x="69" y="464" width="1" height="1"/><rect x="71" y="462" width="1" height="1"/><rect x="71" y="466" width="1" height="1"/><rect x="73" y="464" width="1" height="1"/><rect x="75" y="462" width="1" height="1"/><rect x="75" y="466" width="1" height="1"/><rect x="77" y="464" width="1" height="1"/><rect x="79" y="462" width="1" height="1"/><rect x="79" y="466" width="1" height="1"/><rect x="81" y="464" width="1" height="1"/><rect x="83" y="462" width="1" height="1"/><rect x="83" y="466" width="1" height="1"/><rect x="85" y="464" width="1" height="1"/><rect x="87" y="462" width="1" height="1"/><rect x="87" y="466" width="1" height="1"/><rect x="89" y="464" width="1" height="1"/><rect x="91" y="462" width="1" height="1"/><rect x="91" y="466" width="1" height="1"/><rect x="93" y="464" width="1" height="1"/><rect x="95" y="462" width="1" height="1"/><rect x="95" y="466" width="1" height="1"/><rect x="97" y="464" width="1" height="1"/><rect x="99" y="462" width="1" height="1"/><rect x="99" y="466" width="1" height="1"/><rect x="101" y="464" width="1" height="1"/><rect x="103" y="462" width="1" height="1"/><rect x="103" y="466" width="1" height="1"/><rect x="105" y="464" width="1" height="1"/><rect x="107" y="462" width="1" height="1"/><rect x="107" y="466" width="1" height="1"/><rect x="109" y="464" width="1" height="1"/><rect x="111" y="462" width="1" height="1"/><rect x="111" y="466" width="1" height="1"/><rect x="113" y="464" width="1" height="1"/><rect x="115" y="462" width="1" height="1"/><rect x="115" y="466" width="1" height="1"/><rect x="117" y="464" width="1" height="1"/><rect x="119" y="462" width="1" height="1"/><rect x="119" y="466" width="1" height="1"/><rect x="121" y="464" width="1" height="1"/><rect x="123" y="462" width="1" height="1"/><rect x="123" y="466" width="1" height="1"/><rect x="125" y="464" width="1" height="1"/><rect x="127" y="462" width="1" height="1"/><rect x="127" y="466" width="1" height="1"/><rect x="129" y="464" width="1" height="1"/><rect x="131" y="462" width="1" height="1"/><rect x="131" y="466" width="1" height="1"/><rect x="133" y="464" width="1" height="1"/><rect x="135" y="462" width="1" height="1"/><rect x="135" y="466" width="1" height="1"/><rect x="137" y="464" width="1" height="1"/><rect x="139" y="462" width="1" height="1"/><rect x="139" y="466" width="1" height="1"/><rect x="141" y="464" width="1" height="1"/><rect x="143" y="462" width="1" height="1"/><rect x="143" y="466" width="1" height="1"/><rect x="145" y="464" width="1" height="1"/><rect x="147" y="462" width="1" height="1"/><rect x="147" y="466" width="1" height="1"/><rect x="149" y="464" width="1" height="1"/><rect x="151" y="462" width="1" height="1"/><rect x="151" y="466" width="1" height="1"/><rect x="153" y="464" width="1" height="1"/><rect x="155" y="462" width="1" height="1"/><rect x="155" y="466" width="1" height="1"/><rect x="157" y="464" width="1" height="1"/><rect x="159" y="462" width="1" height="1"/><rect x="159" y="466" width="1" height="1"/><rect x="161" y="464" width="1" height="1"/><rect x="163" y="462" width="1" height="1"/><rect x="163" y="466" width="1" height="1"/><rect x="165" y="464" width="1" height="1"/><rect x="167" y="462" width="1" height="1"/><rect x="167" y="466" width="1" height="1"/><rect x="169" y="464" width="1" height="1"/><rect x="171" y="462" width="1" height="1"/><rect x="171" y="466" width="1" height="1"/><rect x="173" y="464" width="1" height="1"/><rect x="175" y="462" width="1" height="1"/><rect x="175" y="466" width="1" height="1"/><rect x="177" y="464" width="1" height="1"/><rect x="179" y="462" width="1" height="1"/><rect x="179" y="466" width="1" height="1"/><rect x="181" y="464" width="1" height="1"/><rect x="183" y="462" width="1" height="1"/><rect x="183" y="466" width="1" height="1"/><rect x="185" y="464" width="1" height="1"/><rect x="187" y="462" width="1" height="1"/><rect x="187" y="466" width="1" height="1"/><rect x="189" y="464" width="1" height="1"/><rect x="191" y="462" width="1" height="1"/><rect x="191" y="466" width="1" height="1"/><rect x="193" y="464" width="1" height="1"/><rect x="195" y="462" width="1" height="1"/><rect x="195" y="466" width="1" height="1"/><rect x="197" y="464" width="1" height="1"/><rect x="199" y="462" width="1" height="1"/><rect x="199" y="466" width="1" height="1"/><rect x="201" y="464" width="1" height="1"/><rect x="203" y="462" width="1" height="1"/><rect x="203" y="466" width="1" height="1"/><rect x="205" y="464" width="1" height="1"/><rect x="207" y="462" width="1" height="1"/><rect x="207" y="466" width="1" height="1"/><rect x="209" y="464" width="1" height="1"/><rect x="211" y="462" width="1" height="1"/><rect x="211" y="466" width="1" height="1"/><rect x="213" y="464" width="1" height="1"/><rect x="215" y="462" width="1" height="1"/><rect x="215" y="466" width="1" height="1"/><rect x="217" y="464" width="1" height="1"/><rect x="219" y="462" width="1" height="1"/><rect x="219" y="466" width="1" height="1"/><rect x="221" y="464" width="1" height="1"/><rect x="223" y="462" width="1" height="1"/><rect x="223" y="466" width="1" height="1"/><rect x="225" y="464" width="1" height="1"/><rect x="227" y="462" width="1" height="1"/><rect x="227" y="466" width="1" height="1"/><rect x="229" y="464" width="1" height="1"/><rect x="231" y="462" width="1" height="1"/><rect x="231" y="466" width="1" height="1"/><rect x="233" y="464" width="1" height="1"/><rect x="235" y="462" width="1" height="1"/><rect x="235" y="466" width="1" height="1"/><rect x="237" y="464" width="1" height="1"/><rect x="239" y="462" width="1" height="1"/><rect x="239" y="466" width="1" height="1"/><rect x="241" y="464" width="1" height="1"/><rect x="243" y="462" width="1" height="1"/><rect x="243" y="466" width="1" height="1"/><rect x="245" y="464" width="1" height="1"/><rect x="247" y="462" width="1" height="1"/><rect x="247" y="466" width="1" height="1"/><rect x="249" y="464" width="1" height="1"/><rect x="251" y="462" width="1" height="1"/><rect x="251" y="466" width="1" height="1"/><rect x="253" y="464" width="1" height="1"/><rect x="255" y="462" width="1" height="1"/><rect x="255" y="466" width="1" height="1"/><rect x="257" y="464" width="1" height="1"/><rect x="259" y="462" width="1" height="1"/><rect x="259" y="466" width="1" height="1"/><rect x="261" y="464" width="1" height="1"/><rect x="263" y="462" width="1" height="1"/><rect x="263" y="466" width="1" height="1"/><rect x="265" y="464" width="1" height="1"/><rect x="267" y="462" width="1" height="1"/><rect x="267" y="466" width="1" height="1"/><rect x="269" y="464" width="1" height="1"/><rect x="271" y="462" width="1" height="1"/><rect x="271" y="466" width="1" height="1"/><rect x="273" y="464" width="1" height="1"/><rect x="275" y="462" width="1" height="1"/><rect x="275" y="466" width="1" height="1"/><rect x="277" y="464" width="1" height="1"/><rect x="279" y="462" width="1" height="1"/><rect x="279" y="466" width="1" height="1"/><rect x="281" y="464" width="1" height="1"/><rect x="283" y="462" width="1" height="1"/><rect x="283" y="466" width="1" height="1"/><rect x="285" y="464" width="1" height="1"/><rect x="287" y="462" width="1" height="1"/><rect x="287" y="466" width="1" height="1"/><rect x="289" y="464" width="1" height="1"/><rect x="291" y="462" width="1" height="1"/><rect x="291" y="466" width="1" height="1"/><rect x="293" y="464" width="1" height="1"/><rect x="295" y="462" width="1" height="1"/><rect x="295" y="466" width="1" height="1"/><rect x="297" y="464" width="1" height="1"/><rect x="299" y="462" width="1" height="1"/><rect x="299" y="466" width="1" height="1"/><rect x="301" y="464" width="1" height="1"/><rect x="303" y="462" width="1" height="1"/><rect x="303" y="466" width="1" height="1"/><rect x="305" y="464" width="1" height="1"/><rect x="307" y="462" width="1" height="1"/><rect x="307" y="466" width="1" height="1"/><rect x="309" y="464" width="1" height="1"/><rect x="311" y="462" width="1" height="1"/><rect x="311" y="466" width="1" height="1"/><rect x="313" y="464" width="1" height="1"/><rect x="315" y="462" width="1" height="1"/><rect x="315" y="466" width="1" height="1"/><rect x="317" y="464" width="1" height="1"/><rect x="319" y="462" width="1" height="1"/><rect x="319" y="466" width="1" height="1"/><rect x="321" y="464" width="1" height="1"/><rect x="323" y="462" width="1" height="1"/><rect x="323" y="466" width="1" height="1"/><rect x="325" y="464" width="1" height="1"/><rect x="327" y="462" width="1" height="1"/><rect x="327" y="466" width="1" height="1"/><rect x="329" y="464" width="1" height="1"/><rect x="331" y="462" width="1" height="1"/><rect x="331" y="466" width="1" height="1"/><rect x="333" y="464" width="1" height="1"/><rect x="335" y="462" width="1" height="1"/><rect x="335" y="466" width="1" height="1"/><rect x="337" y="464" width="1" height="1"/><rect x="339" y="462" width="1" height="1"/><rect x="339" y="466" width="1" height="1"/><rect x="341" y="464" width="1" height="1"/><rect x="343" y="462" width="1" height="1"/><rect x="343" y="466" width="1" height="1"/><rect x="345" y="464" width="1" height="1"/><rect x="347" y="462" width="1" height="1"/><rect x="347" y="466" width="1" height="1"/><rect x="349" y="464" width="1" height="1"/><rect x="351" y="462" width="1" height="1"/><rect x="351" y="466" width="1" height="1"/><rect x="353" y="464" width="1" height="1"/><rect x="355" y="462" width="1" height="1"/><rect x="355" y="466" width="1" height="1"/><rect x="357" y="464" width="1" height="1"/><rect x="359" y="462" width="1" height="1"/><rect x="359" y="466" width="1" height="1"/><rect x="361" y="464" width="1" height="1"/><rect x="363" y="462" width="1" height="1"/><rect x="363" y="466" width="1" height="1"/><rect x="365" y="464" width="1" height="1"/><rect x="367" y="462" width="1" height="1"/><rect x="367" y="466" width="1" height="1"/><rect x="369" y="464" width="1" height="1"/><rect x="371" y="462" width="1" height="1"/><rect x="371" y="466" width="1" height="1"/><rect x="373" y="464" width="1" height="1"/><rect x="375" y="462" width="1" height="1"/><rect x="375" y="466" width="1" height="1"/><rect x="377" y="464" width="1" height="1"/><rect x="379" y="462" width="1" height="1"/><rect x="379" y="466" width="1" height="1"/><rect x="381" y="464" width="1" height="1"/><rect x="383" y="462" width="1" height="1"/><rect x="383" y="466" width="1" height="1"/><rect x="385" y="464" width="1" height="1"/><rect x="387" y="462" width="1" height="1"/><rect x="387" y="466" width="1" height="1"/><rect x="389" y="464" width="1" height="1"/><rect x="391" y="462" width="1" height="1"/><rect x="391" y="466" width="1" height="1"/><rect x="393" y="464" width="1" height="1"/><rect x="395" y="462" width="1" height="1"/><rect x="395" y="466" width="1" height="1"/><rect x="397" y="464" width="1" height="1"/><rect x="399" y="462" width="1" height="1"/><rect x="399" y="466" width="1" height="1"/><rect x="401" y="464" width="1" height="1"/><rect x="403" y="462" width="1" height="1"/><rect x="403" y="466" width="1" height="1"/><rect x="405" y="464" width="1" height="1"/><rect x="407" y="462" width="1" height="1"/><rect x="407" y="466" width="1" height="1"/><rect x="409" y="464" width="1" height="1"/><rect x="411" y="462" width="1" height="1"/><rect x="411" y="466" width="1" height="1"/><rect x="413" y="464" width="1" height="1"/><rect x="415" y="462" width="1" height="1"/><rect x="415" y="466" width="1" height="1"/><rect x="417" y="464" width="1" height="1"/><rect x="419" y="462" width="1" height="1"/><rect x="419" y="466" width="1" height="1"/><rect x="421" y="464" width="1" height="1"/><rect x="423" y="462" width="1" height="1"/><rect x="423" y="466" width="1" height="1"/><rect x="425" y="464" width="1" height="1"/><rect x="427" y="462" width="1" height="1"/><rect x="427" y="466" width="1" height="1"/><rect x="429" y="464" width="1" height="1"/><rect x="431" y="462" width="1" height="1"/><rect x="431" y="466" width="1" height="1"/><rect x="433" y="464" width="1" height="1"/><rect x="435" y="462" width="1" height="1"/><rect x="435" y="466" width="1" height="1"/><rect x="437" y="464" width="1" height="1"/><rect x="439" y="462" width="1" height="1"/><rect x="439" y="466" width="1" height="1"/><rect x="441" y="464" width="1" height="1"/><rect x="443" y="462" width="1" height="1"/><rect x="443" y="466" width="1" height="1"/><rect x="445" y="464" width="1" height="1"/><rect x="447" y="462" width="1" height="1"/><rect x="447" y="466" width="1" height="1"/><rect x="449" y="464" width="1" height="1"/><rect x="451" y="462" width="1" height="1"/><rect x="451" y="466" width="1" height="1"/><rect x="453" y="464" width="1" height="1"/><rect x="455" y="462" width="1" height="1"/><rect x="455" y="466" width="1" height="1"/><rect x="457" y="464" width="1" height="1"/><rect x="459" y="462" width="1" height="1"/><rect x="459" y="466" width="1" height="1"/><rect x="461" y="464" width="1" height="1"/><rect x="463" y="462" width="1" height="1"/><rect x="463" y="466" width="1" height="1"/><rect x="465" y="464" width="1" height="1"/><rect x="467" y="462" width="1" height="1"/><rect x="467" y="466" width="1" height="1"/><rect x="469" y="464" width="1" height="1"/><rect x="471" y="462" width="1" height="1"/><rect x="471" y="466" width="1" height="1"/><rect x="473" y="464" width="1" height="1"/><rect x="475" y="462" width="1" height="1"/><rect x="475" y="466" width="1" height="1"/><rect x="477" y="464" width="1" height="1"/><rect x="479" y="462" width="1" height="1"/><rect x="479" y="466" width="1" height="1"/><rect x="481" y="464" width="1" height="1"/><rect x="483" y="462" width="1" height="1"/><rect x="483" y="466" width="1" height="1"/><rect x="485" y="464" width="1" height="1"/><rect x="487" y="462" width="1" height="1"/><rect x="487" y="466" width="1" height="1"/><rect x="489" y="464" width="1" height="1"/><rect x="491" y="462" width="1" height="1"/><rect x="491" y="466" width="1" height="1"/><rect x="493" y="464" width="1" height="1"/><rect x="495" y="462" width="1" height="1"/><rect x="495" y="466" width="1" height="1"/><rect x="497" y="464" width="1" height="1"/><rect x="499" y="462" width="1" height="1"/><rect x="499" y="466" width="1" height="1"/><rect x="501" y="464" width="1" height="1"/><rect x="503" y="462" width="1" height="1"/><rect x="503" y="466" width="1" height="1"/><rect x="505" y="464" width="1" height="1"/><rect x="507" y="462" width="1" height="1"/><rect x="507" y="466" width="1" height="1"/><rect x="509" y="464" width="1" height="1"/><rect x="511" y="462" width="1" height="1"/><rect x="511" y="466" width="1" height="1"/><rect x="513" y="464" width="1" height="1"/><rect x="515" y="462" width="1" height="1"/><rect x="515" y="466" width="1" height="1"/><rect x="517" y="464" width="1" height="1"/><rect x="519" y="462" width="1" height="1"/><rect x="519" y="466" width="1" height="1"/><rect x="521" y="464" width="1" height="1"/><rect x="523" y="462" width="1" height="1"/><rect x="523" y="466" width="1" height="1"/><rect x="525" y="464" width="1" height="1"/><rect x="527" y="462" width="1" height="1"/><rect x="527" y="466" width="1" height="1"/><rect x="529" y="464" width="1" height="1"/><rect x="531" y="462" width="1" height="1"/><rect x="531" y="466" width="1" height="1"/><rect x="533" y="464" width="1" height="1"/><rect x="535" y="462" width="1" height="1"/><rect x="535" y="466" width="1" height="1"/><rect x="537" y="464" width="1" height="1"/><rect x="539" y="462" width="1" height="1"/><rect x="539" y="466" width="1" height="1"/><rect x="541" y="464" width="1" height="1"/><rect x="543" y="462" width="1" height="1"/><rect x="543" y="466" width="1" height="1"/><rect x="545" y="464" width="1" height="1"/><rect x="547" y="462" width="1" height="1"/><rect x="547" y="466" width="1" height="1"/><rect x="549" y="464" width="1" height="1"/><rect x="551" y="462" width="1" height="1"/><rect x="551" y="466" width="1" height="1"/><rect x="553" y="464" width="1" height="1"/><rect x="555" y="462" width="1" height="1"/><rect x="555" y="466" width="1" height="1"/><rect x="557" y="464" width="1" height="1"/><rect x="559" y="462" width="1" height="1"/><rect x="559" y="466" width="1" height="1"/><rect x="561" y="464" width="1" height="1"/><rect x="563" y="462" width="1" height="1"/><rect x="563" y="466" width="1" height="1"/><rect x="565" y="464" width="1" height="1"/><rect x="567" y="462" width="1" height="1"/><rect x="567" y="466" width="1" height="1"/><rect x="569" y="464" width="1" height="1"/><rect x="571" y="462" width="1" height="1"/><rect x="571" y="466" width="1" height="1"/><rect x="573" y="464" width="1" height="1"/><rect x="575" y="462" width="1" height="1"/><rect x="575" y="466" width="1" height="1"/><rect x="577" y="464" width="1" height="1"/><rect x="579" y="462" width="1" height="1"/><rect x="579" y="466" width="1" height="1"/><rect x="581" y="464" width="1" height="1"/><rect x="583" y="462" width="1" height="1"/><rect x="583" y="466" width="1" height="1"/><rect x="585" y="464" width="1" height="1"/><rect x="587" y="462" width="1" height="1"/><rect x="587" y="466" width="1" height="1"/><rect x="589" y="464" width="1" height="1"/><rect x="591" y="462" width="1" height="1"/><rect x="591" y="466" width="1" height="1"/><rect x="593" y="464" width="1" height="1"/><rect x="595" y="462" width="1" height="1"/><rect x="595" y="466" width="1" height="1"/><rect x="597" y="464" width="1" height="1"/><rect x="599" y="462" width="1" height="1"/><rect x="599" y="466" width="1" height="1"/><rect x="601" y="464" width="1" height="1"/><rect x="603" y="462" width="1" height="1"/><rect x="603" y="466" width="1" height="1"/><rect x="605" y="464" width="1" height="1"/><rect x="607" y="462" width="1" height="1"/><rect x="607" y="466" width="1" height="1"/><rect x="609" y="464" width="1" height="1"/><rect x="611" y="462" width="1" height="1"/><rect x="611" y="466" width="1" height="1"/><rect x="613" y="464" width="1" height="1"/><rect x="615" y="462" width="1" height="1"/><rect x="615" y="466" width="1" height="1"/><rect x="617" y="464" width="1" height="1"/><rect x="619" y="462" width="1" height="1"/><rect x="619" y="466" width="1" height="1"/><rect x="621" y="464" width="1" height="1"/><rect x="623" y="462" width="1" height="1"/><rect x="623" y="466" width="1" height="1"/><rect x="625" y="464" width="1" height="1"/><rect x="627" y="462" width="1" height="1"/><rect x="627" y="466" width="1" height="1"/><rect x="629" y="464" width="1" height="1"/><rect x="631" y="462" width="1" height="1"/><rect x="631" y="466" width="1" height="1"/><rect x="633" y="464" width="1" height="1"/><rect x="635" y="462" width="1" height="1"/><rect x="635" y="466" width="1" height="1"/><rect x="637" y="464" width="1" height="1"/><rect x="639" y="462" width="1" height="1"/><rect x="639" y="466" width="1" height="1"/><rect x="641" y="464" width="1" height="1"/><rect x="643" y="462" width="1" height="1"/><rect x="643" y="466" width="1" height="1"/><rect x="645" y="464" width="1" height="1"/><rect x="647" y="462" width="1" height="1"/><rect x="647" y="466" width="1" height="1"/><rect x="649" y="464" width="1" height="1"/><rect x="651" y="462" width="1" height="1"/><rect x="651" y="466" width="1" height="1"/><rect x="653" y="464" width="1" height="1"/><rect x="655" y="462" width="1" height="1"/><rect x="655" y="466" width="1" height="1"/><rect x="657" y="464" width="1" height="1"/><rect x="659" y="462" width="1" height="1"/><rect x="659" y="466" width="1" height="1"/><rect x="661" y="464" width="1" height="1"/><rect x="663" y="462" width="1" height="1"/><rect x="663" y="466" width="1" height="1"/><rect x="665" y="464" width="1" height="1"/><rect x="667" y="462" width="1" height="1"/><rect x="667" y="466" width="1" height="1"/><rect x="669" y="464" width="1" height="1"/></g><path fill="#ffffff" d="M678,462 H686 L682,466.2 Z"/><g fill="#ffffff"><path d="M696,459.2 H701.2 V460.3 H700.2 V466 H701.8 V467 H695.4 V466 H697 V460.3 H696 Z M698,460.3 V466 H699.2 V460.3 Z" fill-rule="evenodd"/><rect x="698.2" y="467" width="1.2" height="3"/></g><path d="M710.5,460 L719.5,467.8 M719.5,460 L710.5,467.8" stroke="#ffffff" stroke-width="1.4"/><g transform="translate(38,499.2) scale(0.980952380952381,0.9777777777777779)"><path fill="#78bdf7"  d="M0.3,2.6 L4.8,0.2 H7.6 L10.3,2.2 V7 L5.5,9 H3.6 L0.3,7.5 Z"/><path d="M3.8,3.6 L6.6,2.2" stroke="#1e1e1e" stroke-width="1.4"/></g><g transform="translate(38,516.2) scale(0.980952380952381,0.9777777777777779)"><path fill="#78bdf7"  d="M0.3,2.6 L4.8,0.2 H7.6 L10.3,2.2 V7 L5.5,9 H3.6 L0.3,7.5 Z"/><path d="M3.8,3.6 L6.6,2.2" stroke="#1e1e1e" stroke-width="1.4"/></g><g transform="translate(38,533.2) scale(0.980952380952381,0.9777777777777779)"><path fill="#78bdf7"  d="M0.3,2.6 L4.8,0.2 H7.6 L10.3,2.2 V7 L5.5,9 H3.6 L0.3,7.5 Z"/><path d="M3.8,3.6 L6.6,2.2" stroke="#1e1e1e" stroke-width="1.4"/></g><path fill="#e0e0e0" d="M22.9,556.9 H28.9 V550.9 Z"/><g transform="translate(38,550.2) scale(0.980952380952381,0.9777777777777779)"><path fill="#78bdf7"  d="M0.3,2.6 L4.8,0.2 H7.6 L10.3,2.2 V7 L5.5,9 H3.6 L0.3,7.5 Z"/><path d="M3.8,3.6 L6.6,2.2" stroke="#1e1e1e" stroke-width="1.4"/></g><path fill="none" stroke="#e8e8e8" stroke-width="1" d="M41.4,567.3 V575.5 L45.6,571.4 Z"/><g transform="translate(54.8,566.6) scale(1.0,1.1111111111111112)"><path fill="#78bdf7" stroke="#1b1510" stroke-width="1.1" d="M0.3,2.6 L4.8,0.2 H7.6 L10.3,2.2 V7 L5.5,9 H3.6 L0.3,7.5 Z"/><path d="M3.8,3.6 L6.6,2.2" stroke="#1e1e1e" stroke-width="1.4"/></g><path fill="none" stroke="#e8e8e8" stroke-width="1" d="M41.4,584.3 V592.5 L45.6,588.4 Z"/><g transform="translate(54.8,583.6) scale(1.0,1.1111111111111112)"><path fill="#78bdf7" stroke="#1b1510" stroke-width="1.1" d="M0.3,2.6 L4.8,0.2 H7.6 L10.3,2.2 V7 L5.5,9 H3.6 L0.3,7.5 Z"/><path d="M3.8,3.6 L6.6,2.2" stroke="#1e1e1e" stroke-width="1.4"/></g><path fill="none" stroke="#e8e8e8" stroke-width="1" d="M41.4,601.3 V609.5 L45.6,605.4 Z"/><g transform="translate(54.8,600.6) scale(1.0,1.1111111111111112)"><path fill="#78bdf7" stroke="#1b1510" stroke-width="1.1" d="M0.3,2.6 L4.8,0.2 H7.6 L10.3,2.2 V7 L5.5,9 H3.6 L0.3,7.5 Z"/><path d="M3.8,3.6 L6.6,2.2" stroke="#1e1e1e" stroke-width="1.4"/></g><path fill="none" stroke="#e8e8e8" stroke-width="1" d="M41.4,618.3 V626.5 L45.6,622.4 Z"/><g transform="translate(54.8,617.6) scale(1.0,1.1111111111111112)"><path fill="#78bdf7" stroke="#1b1510" stroke-width="1.1" d="M0.3,2.6 L4.8,0.2 H7.6 L10.3,2.2 V7 L5.5,9 H3.6 L0.3,7.5 Z"/><path d="M3.8,3.6 L6.6,2.2" stroke="#1e1e1e" stroke-width="1.4"/></g><path fill="none" stroke="#e8e8e8" stroke-width="1" d="M41.4,635.3 V643.5 L45.6,639.4 Z"/><g transform="translate(55.1,635.2) scale(0.9238095238095237,0.9777777777777779)"><path fill="#78bdf7"  d="M0.3,2.6 L4.8,0.2 H7.6 L10.3,2.2 V7 L5.5,9 H3.6 L0.3,7.5 Z"/><path d="M3.8,3.6 L6.6,2.2" stroke="#1e1e1e" stroke-width="1.4"/></g><g transform="translate(38,652.2) scale(0.980952380952381,0.9777777777777779)"><path fill="#78bdf7"  d="M0.3,2.6 L4.8,0.2 H7.6 L10.3,2.2 V7 L5.5,9 H3.6 L0.3,7.5 Z"/><path d="M3.8,3.6 L6.6,2.2" stroke="#1e1e1e" stroke-width="1.4"/></g><circle cx="639.3" cy="519.6" r="2.9" stroke="#c0c0c0" stroke-width="1.3" fill="none"/><path d="M641.3,521.6 L645.5,525.6" stroke="#c0c0c0" stroke-width="1.6"/><path fill="#c0c0c0" d="M650.6,520.2 H655.8 L653.2,523 Z"/><path fill="#555558" d="M712.5,485.8 L717.4,481 L722.3,485.8 Z"/><path fill="#555558" d="M712.5,668 L717.4,673 L722.3,668 Z"/></svg>
</body></html>
